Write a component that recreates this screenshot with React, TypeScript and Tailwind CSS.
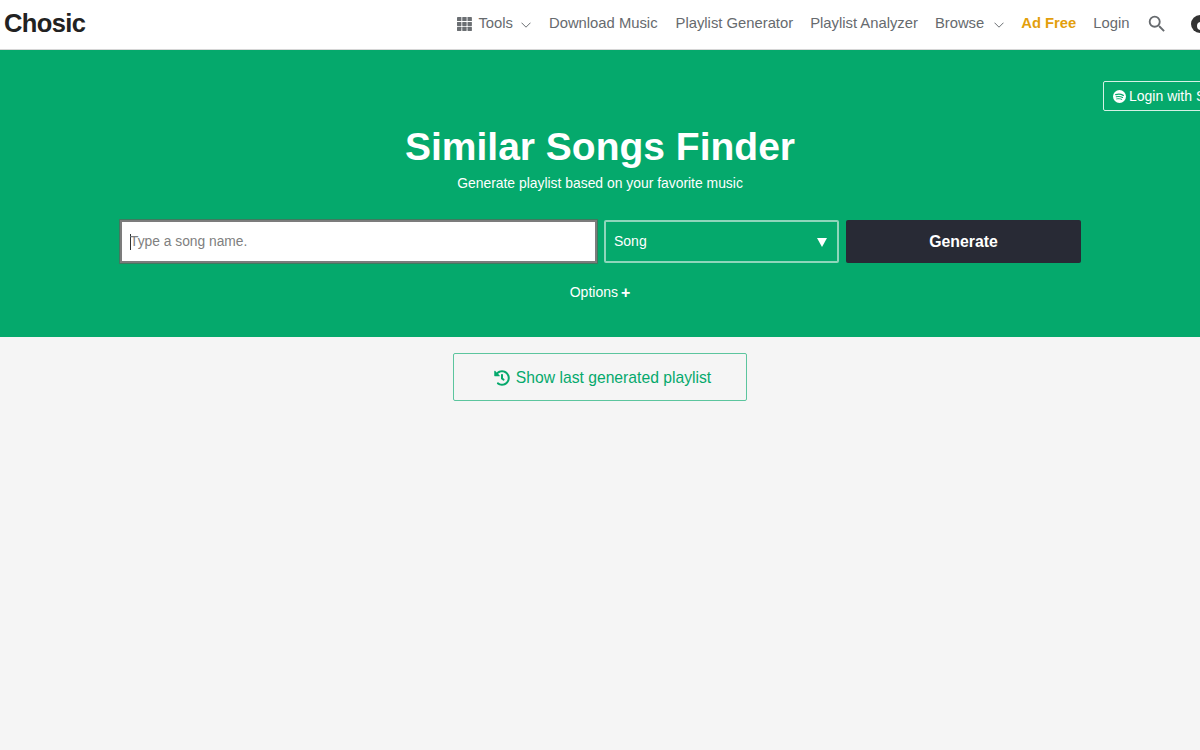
import { FaHistory } from "react-icons/fa";
import { MdSearch } from "react-icons/md";

function GridIcon() {
  return (
    <svg width="15" height="14" viewBox="0 0 15 14" fill="#6b6f73" className="shrink-0">
      {[0, 5.25, 10.5].map((x) =>
        [0, 4.9, 9.8].map((y) => <rect key={`${x}-${y}`} x={x} y={y} width="4.4" height="4.1" rx="0.4" />)
      )}
    </svg>
  );
}

function Chevron() {
  return (
    <svg width="10" height="6" viewBox="0 0 10 6" fill="none" stroke="#6b6f73" strokeWidth="1" className="mt-[3px] shrink-0">
      <path d="M0.5 0.7 5 5.2 9.5 0.7" />
    </svg>
  );
}

function MoonIcon() {
  return (
    <svg width="18" height="18" viewBox="0 0 18 18" className="shrink-0">
      <circle cx="9" cy="9" r="9" fill="#333333" />
      <circle cx="10" cy="11" r="4" fill="#ffffff" />
    </svg>
  );
}

function SpotifyIcon() {
  return (
    <svg width="13" height="13" viewBox="0 0 24 24" className="shrink-0">
      <circle cx="12" cy="12" r="12" fill="#fff" />
      <g fill="none" stroke="#05a96c" strokeLinecap="round">
        <path d="M5 8.600c4.600-1.300 9.800-1 14 1.300" strokeWidth="2.400" />
        <path d="M6 12.600c3.900-1 8.200-.7 11.700 1.300" strokeWidth="2" />
        <path d="M6.800 16.400c3.200-.8 6.500-.5 9.400 1" strokeWidth="1.700" />
      </g>
    </svg>
  );
}

function Navbar() {
  return (
    <header className="flex h-[50px] items-center overflow-hidden border-b border-[#d6d6d6] bg-white">
      <a className="mb-[2px] ml-1 text-[25.500px] font-bold leading-none tracking-[-0.6px] text-[#222222]">Chosic</a>
      <nav className="mb-[2px] ml-[372px] flex shrink-0 items-center text-[14.800px] text-[#666a6e]">
        <span className="flex items-center">
          <GridIcon />
          <span className="ml-[6px]">Tools</span>
          <span className="ml-[8px]">
            <Chevron />
          </span>
        </span>
        <span className="ml-[18px]">Download Music</span>
        <span className="ml-[18px]">Playlist Generator</span>
        <span className="ml-[17px]">Playlist Analyzer</span>
        <span className="ml-[17px] flex items-center">
          Browse
          <span className="ml-[10px]">
            <Chevron />
          </span>
        </span>
        <span className="ml-[17px] font-bold text-[#e39f0c]">Ad Free</span>
        <span className="ml-[17px]">Login</span>
        <MdSearch className="ml-[16px] shrink-0" size={22} />
        <span className="ml-[23px] flex">
          <MoonIcon />
        </span>
      </nav>
    </header>
  );
}

function Hero() {
  return (
    <section className="relative flex h-[287px] flex-col items-center bg-[#05a96c] pt-[74px] text-white">
      <a className="absolute left-[1103px] top-[31px] flex h-[30px] w-[130px] items-center rounded-[2px] border border-[#d5f1e5] pl-[9px] text-[14px]">
        <SpotifyIcon />
        <span className="ml-[3px] whitespace-nowrap">Login with Spotify</span>
      </a>
      <h1 className="text-[39px] font-bold leading-[46px]">Similar Songs Finder</h1>
      <p className="mt-[3px] text-[13.900px] leading-[20px]">Generate playlist based on your favorite music</p>
      <form className="ml-[120px] mt-[27px] flex w-[961px] gap-[7px] self-start">
        <div className="flex h-[43px] w-[477px] items-center border-2 border-[#7c7c7c] bg-white pl-[8px] outline outline-1 outline-[#3f7a5f]">
          <span className="h-[16px] w-px shrink-0 bg-[#333333]" />
          <input
            placeholder="Type a song name."
            className="-ml-px w-full bg-transparent pt-px text-[13.800px] outline-none placeholder:text-[#808080]"
          />
        </div>
        <div className="flex h-[43px] w-[235px] items-center justify-between rounded-[2px] border-2 border-[#8fd6bb] pl-[8px] pr-[10px] text-[14px]">
          <span>Song</span>
          <svg width="10" height="10" viewBox="0 0 10 10" fill="#fff">
            <path d="M0 1h10L5 10z" />
          </svg>
        </div>
        <button className="h-[43px] w-[235px] rounded-[2px] bg-[#282a35] text-[15.800px] font-bold">Generate</button>
      </form>
      <div className="mt-[19px] flex items-center text-[14px] leading-[20px]">
        Options
        <span className="ml-[3px] mt-px text-[16px] font-bold leading-none">+</span>
      </div>
    </section>
  );
}

export default function App() {
  return (
    <div className="h-[750px] w-[1200px] overflow-hidden bg-[#f5f5f5] font-['Liberation_Sans',sans-serif]">
      <Navbar />
      <Hero />
      <main className="flex justify-center pt-4">
        <button className="flex h-[48px] w-[294px] items-center justify-center rounded-[2px] border border-[#5cc59e] pl-[5px] pt-px text-[15.700px] text-[#05a96c]">
          <FaHistory size={16} />
          <span className="ml-[6px]">Show last generated playlist</span>
        </button>
      </main>
    </div>
  );
}
